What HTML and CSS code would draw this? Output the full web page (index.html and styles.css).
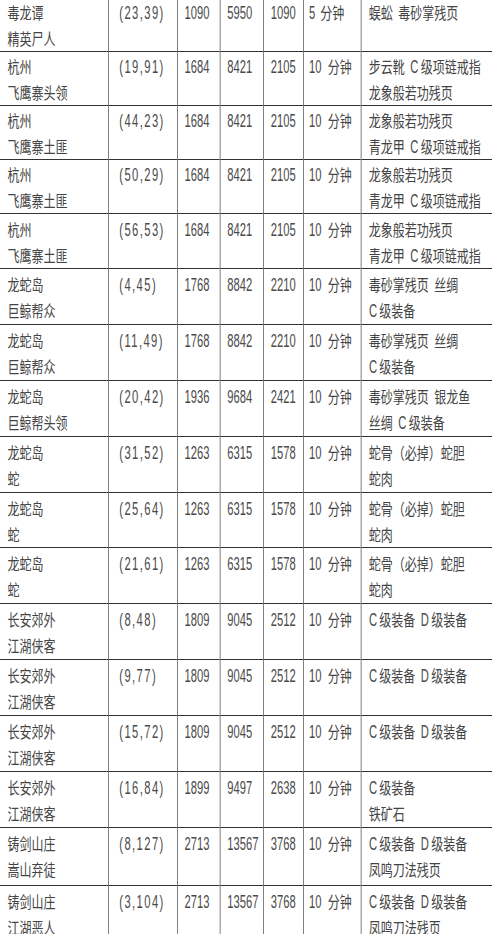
FILE: index.html
```html
<!DOCTYPE html>
<html lang="zh-CN">
<head>
<meta charset="utf-8">
<title>刷怪表</title>
<link rel="stylesheet" href="styles.css">
</head>
<body>
<div class="sheet">
<table class="grid">
  <colgroup>
    <col class="c-name"><col class="c-pos"><col class="c-n1"><col class="c-n2"><col class="c-n3"><col class="c-time"><col class="c-drop">
  </colgroup>
  <tbody>
    <tr><td class="name">毒龙谭<br>精英尸人</td><td class="pos"><span class="lat">(23,39)</span></td><td class="num"><span class="lat">1090</span></td><td class="num"><span class="lat">5950</span></td><td class="num"><span class="lat">1090</span></td><td class="time"><span class="lat">5</span> 分钟</td><td class="drop">蜈蚣 毒砂掌残页</td></tr>
    <tr class="r54"><td class="name">杭州<br>飞鹰寨头领</td><td class="pos"><span class="lat">(19,91)</span></td><td class="num"><span class="lat">1684</span></td><td class="num"><span class="lat">8421</span></td><td class="num"><span class="lat">2105</span></td><td class="time"><span class="lat">10</span> 分钟</td><td class="drop">步云靴 <span class="lat">C</span>级项链戒指<br>龙象般若功残页</td></tr>
    <tr class="r54"><td class="name">杭州<br>飞鹰寨土匪</td><td class="pos"><span class="lat">(44,23)</span></td><td class="num"><span class="lat">1684</span></td><td class="num"><span class="lat">8421</span></td><td class="num"><span class="lat">2105</span></td><td class="time"><span class="lat">10</span> 分钟</td><td class="drop">龙象般若功残页<br>青龙甲 <span class="lat">C</span>级项链戒指</td></tr>
    <tr class="r54"><td class="name">杭州<br>飞鹰寨土匪</td><td class="pos"><span class="lat">(50,29)</span></td><td class="num"><span class="lat">1684</span></td><td class="num"><span class="lat">8421</span></td><td class="num"><span class="lat">2105</span></td><td class="time"><span class="lat">10</span> 分钟</td><td class="drop">龙象般若功残页<br>青龙甲 <span class="lat">C</span>级项链戒指</td></tr>
    <tr><td class="name">杭州<br>飞鹰寨土匪</td><td class="pos"><span class="lat">(56,53)</span></td><td class="num"><span class="lat">1684</span></td><td class="num"><span class="lat">8421</span></td><td class="num"><span class="lat">2105</span></td><td class="time"><span class="lat">10</span> 分钟</td><td class="drop">龙象般若功残页<br>青龙甲 <span class="lat">C</span>级项链戒指</td></tr>
    <tr class="r56"><td class="name">龙蛇岛<br>巨鲸帮众</td><td class="pos"><span class="lat">(4,45)</span></td><td class="num"><span class="lat">1768</span></td><td class="num"><span class="lat">8842</span></td><td class="num"><span class="lat">2210</span></td><td class="time"><span class="lat">10</span> 分钟</td><td class="drop">毒砂掌残页 丝绸<br><span class="lat">C</span>级装备</td></tr>
    <tr class="r56"><td class="name">龙蛇岛<br>巨鲸帮众</td><td class="pos"><span class="lat">(11,49)</span></td><td class="num"><span class="lat">1768</span></td><td class="num"><span class="lat">8842</span></td><td class="num"><span class="lat">2210</span></td><td class="time"><span class="lat">10</span> 分钟</td><td class="drop">毒砂掌残页 丝绸<br><span class="lat">C</span>级装备</td></tr>
    <tr class="r56"><td class="name">龙蛇岛<br>巨鲸帮头领</td><td class="pos"><span class="lat">(20,42)</span></td><td class="num"><span class="lat">1936</span></td><td class="num"><span class="lat">9684</span></td><td class="num"><span class="lat">2421</span></td><td class="time"><span class="lat">10</span> 分钟</td><td class="drop">毒砂掌残页 银龙鱼<br>丝绸 <span class="lat">C</span>级装备</td></tr>
    <tr class="r56"><td class="name">龙蛇岛<br>蛇</td><td class="pos"><span class="lat">(31,52)</span></td><td class="num"><span class="lat">1263</span></td><td class="num"><span class="lat">6315</span></td><td class="num"><span class="lat">1578</span></td><td class="time"><span class="lat">10</span> 分钟</td><td class="drop">蛇骨（必掉）蛇胆<br>蛇肉</td></tr>
    <tr><td class="name">龙蛇岛<br>蛇</td><td class="pos"><span class="lat">(25,64)</span></td><td class="num"><span class="lat">1263</span></td><td class="num"><span class="lat">6315</span></td><td class="num"><span class="lat">1578</span></td><td class="time"><span class="lat">10</span> 分钟</td><td class="drop">蛇骨（必掉）蛇胆<br>蛇肉</td></tr>
    <tr class="r56"><td class="name">龙蛇岛<br>蛇</td><td class="pos"><span class="lat">(21,61)</span></td><td class="num"><span class="lat">1263</span></td><td class="num"><span class="lat">6315</span></td><td class="num"><span class="lat">1578</span></td><td class="time"><span class="lat">10</span> 分钟</td><td class="drop">蛇骨（必掉）蛇胆<br>蛇肉</td></tr>
    <tr class="r56"><td class="name">长安郊外<br>江湖侠客</td><td class="pos"><span class="lat">(8,48)</span></td><td class="num"><span class="lat">1809</span></td><td class="num"><span class="lat">9045</span></td><td class="num"><span class="lat">2512</span></td><td class="time"><span class="lat">10</span> 分钟</td><td class="drop"><span class="lat">C</span>级装备 <span class="lat">D</span>级装备</td></tr>
    <tr class="r56"><td class="name">长安郊外<br>江湖侠客</td><td class="pos"><span class="lat">(9,77)</span></td><td class="num"><span class="lat">1809</span></td><td class="num"><span class="lat">9045</span></td><td class="num"><span class="lat">2512</span></td><td class="time"><span class="lat">10</span> 分钟</td><td class="drop"><span class="lat">C</span>级装备 <span class="lat">D</span>级装备</td></tr>
    <tr class="r56"><td class="name">长安郊外<br>江湖侠客</td><td class="pos"><span class="lat">(15,72)</span></td><td class="num"><span class="lat">1809</span></td><td class="num"><span class="lat">9045</span></td><td class="num"><span class="lat">2512</span></td><td class="time"><span class="lat">10</span> 分钟</td><td class="drop"><span class="lat">C</span>级装备 <span class="lat">D</span>级装备</td></tr>
    <tr class="r56"><td class="name">长安郊外<br>江湖侠客</td><td class="pos"><span class="lat">(16,84)</span></td><td class="num"><span class="lat">1899</span></td><td class="num"><span class="lat">9497</span></td><td class="num"><span class="lat">2638</span></td><td class="time"><span class="lat">10</span> 分钟</td><td class="drop"><span class="lat">C</span>级装备<br>铁矿石</td></tr>
    <tr class="r58"><td class="name">铸剑山庄<br>嵩山弃徒</td><td class="pos"><span class="lat">(8,127)</span></td><td class="num"><span class="lat">2713</span></td><td class="num"><span class="lat">13567</span></td><td class="num"><span class="lat">3768</span></td><td class="time"><span class="lat">10</span> 分钟</td><td class="drop"><span class="lat">C</span>级装备 <span class="lat">D</span>级装备<br>凤鸣刀法残页</td></tr>
    <tr class="r56"><td class="name">铸剑山庄<br>江湖恶人</td><td class="pos"><span class="lat">(3,104)</span></td><td class="num"><span class="lat">2713</span></td><td class="num"><span class="lat">13567</span></td><td class="num"><span class="lat">3768</span></td><td class="time"><span class="lat">10</span> 分钟</td><td class="drop"><span class="lat">C</span>级装备 <span class="lat">D</span>级装备<br>凤鸣刀法残页</td></tr>
  </tbody>
</table>
</div>
</body>
</html>
```

FILE: styles.css
```css
html, body {
  margin: 0;
  padding: 0;
  background: #ffffff;
  overflow: hidden;
}

/* the sheet is drawn narrow: everything is squeezed horizontally */
.sheet {
  width: 656px;
  transform: scaleX(0.75);
  transform-origin: 0 0;
  margin-top: -4px;
}

.grid {
  border-collapse: collapse;
  table-layout: fixed;
  width: 656px;
  font-family: "Noto Sans CJK SC", "Noto Sans", sans-serif;
  font-size: 16px;
  line-height: 26px;
  color: #444444;
}

.c-name { width: 144px; }
.c-pos { width: 92px; }
.c-n1 { width: 57px; }
.c-n2 { width: 58px; }
.c-n3 { width: 53px; }
.c-time { width: 77px; }
.c-drop { width: 175px; }

.grid td {
  vertical-align: top;
  padding: 2px 0 0 10px;
  height: 52px;
  border-top: 1px solid #333333;
  border-left: 1px solid #555555;
  white-space: nowrap;
  overflow: visible;
}

.grid tr.r54 td {
  padding-top: 1px;
  height: 52px;
}

.grid tr.r56 td {
  height: 53px;
}

.grid tr.r58 td {
  height: 55px;
}

.grid td.name {
  border-left: none;
  padding-left: 10px;
}

.grid td.pos {
  padding-left: 14px;
}

.grid td.num {
  padding-left: 9px;
}

.grid td.time {
  padding-left: 7px;
}

.grid td.drop {
  padding-left: 10px;
  word-spacing: 4px;
}

.lat {
  display: inline-block;
  font-family: "Liberation Sans", Arial, sans-serif;
  font-size: 18px;
  line-height: 18px;
  word-spacing: 0;
  color: #4a4a4a;
  transform: scaleX(0.83);
  transform-origin: 0 50%;
}

.time .lat {
  margin-right: 2px;
}

.drop .lat {
  margin-right: 1px;
}

.pos .lat {
  letter-spacing: 2.3px;
}
```
